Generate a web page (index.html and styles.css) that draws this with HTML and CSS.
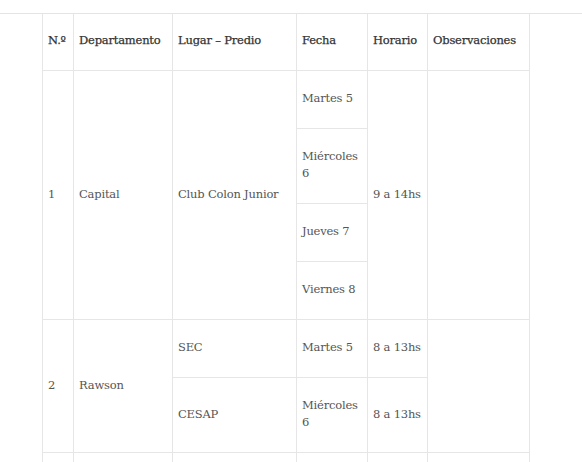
FILE: index.html
```html
<!DOCTYPE html>
<html lang="es">
<head>
<meta charset="utf-8">
<title>Cronograma</title>
<link rel="stylesheet" href="styles.css">
</head>
<body>
<div class="page">
  <table class="schedule">
    <colgroup>
      <col class="c-num">
      <col class="c-dep">
      <col class="c-lugar">
      <col class="c-fecha">
      <col class="c-hora">
      <col class="c-obs">
    </colgroup>
    <thead>
      <tr>
        <th>N.º</th>
        <th>Departamento</th>
        <th>Lugar – Predio</th>
        <th>Fecha</th>
        <th>Horario</th>
        <th>Observaciones</th>
      </tr>
    </thead>
    <tbody>
      <tr>
        <td rowspan="4">1</td>
        <td rowspan="4">Capital</td>
        <td rowspan="4">Club Colon Junior</td>
        <td>Martes 5</td>
        <td rowspan="4" class="nowrap">9 a 14hs</td>
        <td rowspan="4"></td>
      </tr>
      <tr><td>Miércoles 6</td></tr>
      <tr><td>Jueves 7</td></tr>
      <tr><td>Viernes 8</td></tr>
      <tr>
        <td rowspan="2">2</td>
        <td rowspan="2">Rawson</td>
        <td>SEC</td>
        <td>Martes 5</td>
        <td class="nowrap">8 a 13hs</td>
        <td rowspan="2"></td>
      </tr>
      <tr>
        <td>CESAP</td>
        <td>Miércoles 6</td>
        <td class="nowrap">8 a 13hs</td>
      </tr>
      <tr class="next-row">
        <td></td>
        <td></td>
        <td></td>
        <td></td>
        <td></td>
        <td></td>
      </tr>
    </tbody>
  </table>
</div>
</body>
</html>
```

FILE: styles.css
```css
html, body {
  margin: 0;
  padding: 0;
  background: #fff;
}

body {
  font-family: "DejaVu Serif", "Liberation Serif", serif;
  font-size: 11.5px;
  letter-spacing: -0.2px;
  line-height: 17px;
  color: #555;
}

.page {
  margin-top: 13px;
  border-top: 1px solid #e4e4e4;
  padding-left: 42px;
}

.schedule {
  border-collapse: collapse;
  table-layout: fixed;
  width: 488px;
}

.c-num { width: 31px; }
.c-dep { width: 99px; }
.c-lugar { width: 124px; }
.c-fecha { width: 71px; }
.c-hora { width: 60px; }
.c-obs { width: 102px; }

.schedule th,
.schedule td {
  border: 1px solid #e6e6e6;
  padding: 20px 5px;
  text-align: left;
  vertical-align: middle;
}

.schedule td {
  padding-top: 19px;
  padding-bottom: 21px;
}

.schedule th {
  border-top: 0;
  padding-top: 18px;
  padding-bottom: 21px;
  font-weight: normal;
  color: #333;
  -webkit-text-stroke: 0.25px #333;
}

.next-row td {
  height: 57px;
}

.nowrap {
  white-space: nowrap;
}
```
